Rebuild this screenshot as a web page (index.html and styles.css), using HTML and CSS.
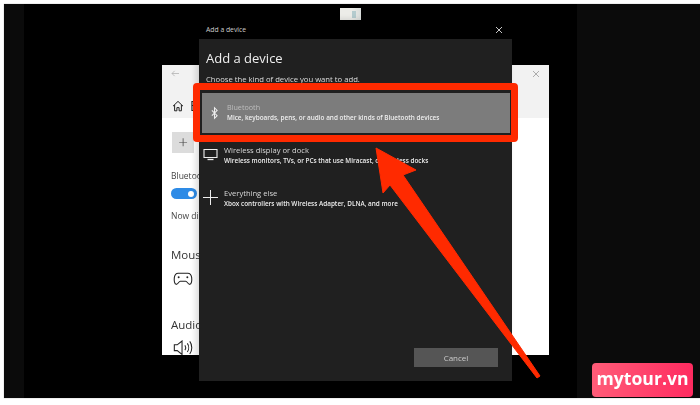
FILE: index.html
```html
<!DOCTYPE html>
<html lang="en">
<head>
<meta charset="utf-8">
<title>Add a device</title>
<link rel="stylesheet" href="styles.css">
</head>
<body>
<main class="stage">
  <div class="center-black"></div>
  <div class="thumb"><span class="thumb-dot"></span></div>

  <section class="settings">
    <header class="settings-bar">
      <svg class="back" viewBox="0 0 10 8"><path d="M9 4H1M4 1 1 4l3 3" fill="none" stroke="#aaa" stroke-width=".8"/></svg>
      <svg class="close-light" viewBox="0 0 8 8"><path d="M1 1l6 6M7 1 1 7" fill="none" stroke="#999" stroke-width=".8"/></svg>
    </header>
    <div class="settings-body">
      <div class="settings-title">
        <svg class="home" viewBox="0 0 12 12"><path d="M1 6.2 6 1.4l5 4.8M2.6 5v5.8h2.3V7.6h2.2v3.2h2.3V5" fill="none" stroke="#222" stroke-width="1"/></svg>
        <span class="page-name">B</span>
      </div>
      <div class="add-tile">+</div>
      <p class="label label-bt">Bluetooth</p>
      <div class="toggle"><span class="knob"></span></div>
      <p class="label label-now">Now discoverable as</p>
      <p class="label label-big label-mouse">Mouse, keyboard, &amp; pen</p>
      <svg class="gamepad" viewBox="0 0 20 14"><path d="M5 1.2h10c2.2 0 3.6 1.8 4 4.6.4 3.2-.2 6.8-2 7-1.8.2-2.6-3.2-4.2-3.2H7.2C5.600 9.600 4.800 13 3 12.800c-1.800-.2-2.400-3.800-2-7 .4-2.800 1.800-4.600 4-4.600z" fill="none" stroke="#222" stroke-width="1.100"/><circle cx="5.500" cy="5.500" r="1" fill="#222"/><circle cx="14.500" cy="5.500" r="1" fill="#222"/></svg>
      <p class="label label-big label-audio">Audio</p>
      <svg class="speaker" viewBox="0 0 20 16"><path d="M1 5h3l5-4v14l-5-4H1z" fill="none" stroke="#222" stroke-width="1.100"/><path d="M12 5.500c1 1.500 1 3.500 0 5M14.500 3.500c1.800 2.500 1.800 6.500 0 9M17 1.500c2.800 3.500 2.800 9.500 0 13" fill="none" stroke="#222" stroke-width="1.100"/></svg>
    </div>
  </section>

  <section class="dialog">
    <header class="dialog-bar">
      <span class="dialog-bar-title">Add a device</span>
      <svg class="close-dark" viewBox="0 0 8 8"><path d="M1 1l6 6M7 1 1 7" fill="none" stroke="#ddd" stroke-width=".9"/></svg>
    </header>
    <div class="dialog-body">
      <h1 class="heading">Add a device</h1>
      <p class="subtitle">Choose the kind of device you want to add.</p>
      <ul class="options">
        <li class="option option-active">
          <svg class="icon-bt" viewBox="0 0 8 14"><path d="M1 4l6 6-3 3V1l3 3-6 6" fill="none" stroke="#eee" stroke-width="1.200"/></svg>
          <div>
            <div class="option-title option-title-active">Bluetooth</div>
            <div class="option-desc">Mice, keyboards, pens, or audio and other kinds of Bluetooth devices</div>
          </div>
        </li>
        <li class="option">
          <svg class="icon-main" viewBox="0 0 15 12"><path d="M1 1h13v8H1z" fill="none" stroke="#eee" stroke-width="1.100"/><path d="M4.500 11h6" stroke="#eee" stroke-width="1.300"/></svg>
          <div>
            <div class="option-title">Wireless display or dock</div>
            <div class="option-desc">Wireless monitors, TVs, or PCs that use Miracast, or wireless docks</div>
          </div>
        </li>
        <li class="option">
          <svg class="icon-main" viewBox="0 0 15 15"><path d="M7.500 0v15M0 7.500h15" fill="none" stroke="#eee" stroke-width="1"/></svg>
          <div>
            <div class="option-title">Everything else</div>
            <div class="option-desc">Xbox controllers with Wireless Adapter, DLNA, and more</div>
          </div>
        </li>
      </ul>
      <div class="actions"><button class="cancel" type="button">Cancel</button></div>
    </div>
  </section>

  <div class="red-box"></div>
  <svg class="arrow" viewBox="0 0 700 405"><path d="M376 148 416 170 403 175 540 376 537 378 390 185 383 193Z" fill="#ff2a00" stroke="#ff2a00" stroke-width="1" stroke-linejoin="round"/></svg>

  <div class="logo">mytour.vn</div>
</main>
</body>
</html>
```

FILE: styles.css
```css
* { box-sizing: border-box; }
html, body { margin: 0; padding: 0; }
body {
  width: 700px;
  height: 405px;
  background: #fff;
  overflow: hidden;
  font-family: "Open Sans", "Liberation Sans", sans-serif;
}
.stage {
  position: relative;
  width: 696px;
  height: 394px;
  margin: 4px 0 0 4px;
  background: #0b0b0b;
  box-shadow: 0 0 1px #999;
  overflow: hidden;
}
.center-black {
  position: absolute;
  left: 20px;
  top: 0;
  width: 553px;
  height: 100%;
  background: #000;
}
.thumb {
  position: absolute;
  left: 336px;
  top: 4px;
  width: 21px;
  height: 12px;
  background: linear-gradient(90deg, #ecece8 55%, #d8dcda);
  display: flex;
  align-items: center;
  justify-content: center;
  filter: blur(.5px);
}
.thumb-dot {
  width: 4px;
  height: 7px;
  margin-left: 6px;
  background: #b4cbce;
}

/* White settings window behind the dialog */
.settings {
  position: absolute;
  left: 158px;
  top: 61px;
  width: 387px;
  height: 290px;
  background: #fff;
  color: #333;
  overflow: hidden;
  filter: blur(.35px);
}
.settings-bar {
  height: 16px;
  background: #f2f2f2;
  display: flex;
  align-items: center;
  justify-content: space-between;
  padding: 0 9px;
}
.back { width: 9px; height: 7px; }
.close-light { width: 8px; height: 8px; margin-top: 1px; }
.settings-body {
  height: 274px;
  padding-left: 9px;
  background: linear-gradient(#f2f2f2 37px, #fff 37px);
  display: flex;
  flex-direction: column;
  align-items: flex-start;
}
.settings-title {
  display: flex;
  align-items: center;
  gap: 6px;
  height: 20px;
  margin-top: 15px;
  padding-left: 1px;
  white-space: nowrap;
}
.home { width: 12px; height: 12px; }
.page-name { font-size: 14px; color: #222; }
.add-tile {
  width: 22px;
  height: 22px;
  margin: 17px 0 0 1px;
  background: #dcdcdc;
  font-size: 17px;
  line-height: 20px;
  text-align: center;
  color: #444;
  font-weight: 300;
}
.label {
  margin: 0;
  font-size: 8.500px;
  line-height: 12px;
  white-space: nowrap;
  color: #444;
}
.label-big { font-size: 11.500px; line-height: 15px; color: #333; }
.label-bt { margin-top: 17px; }
.toggle {
  width: 26px;
  height: 11px;
  margin-top: 6px;
  border-radius: 6px;
  background: #2e8be6;
  display: flex;
  align-items: center;
  justify-content: flex-end;
  padding-right: 3px;
}
.knob { width: 6px; height: 6px; border-radius: 50%; background: #fff; }
.label-now { margin-top: 11px; }
.label-mouse { margin-top: 25px; }
.gamepad { width: 20px; height: 14px; margin: 10px 0 0 2px; }
.label-audio { margin-top: 31px; }
.speaker { width: 20px; height: 16px; margin: 8px 0 0 2px; }

/* Dark dialog */
.dialog {
  position: absolute;
  left: 195px;
  top: 16px;
  width: 313px;
  height: 361px;
  background: #202020;
  color: #fff;
  box-shadow: -3px 0 6px rgba(0, 0, 0, .15);
  display: flex;
  flex-direction: column;
  filter: blur(.3px);
}
.dialog-bar {
  height: 19px;
  background: #000;
  display: flex;
  align-items: center;
  justify-content: space-between;
  padding: 0 9px 0 7px;
  flex: none;
}
.dialog-bar-title { font-size: 6.800px; color: #ccc; }
.close-dark { width: 8px; height: 8px; }
.dialog-body {
  flex: 1;
  display: flex;
  flex-direction: column;
  min-height: 0;
}
.heading {
  margin: 9px 0 0 7px;
  font-size: 13px;
  line-height: 20px;
  font-weight: 400;
  color: #eee;
}
.subtitle {
  margin: 5px 0 0 7px;
  font-size: 7.700px;
  line-height: 12px;
  color: #ddd;
}
.options {
  list-style: none;
  margin: 8px 2px 0 3px;
  padding: 0;
}
.option {
  height: 43px;
  display: flex;
  align-items: flex-start;
  padding: 9px 0 0 1px;
  gap: 6px;
}
.option-active {
  height: 40px;
  margin-bottom: 3px;
  background: #7c7c7c;
  padding: 9px 0 0 9px;
  gap: 9px;
}
.icon-bt { width: 7px; height: 14px; margin-top: 4px; }
.icon-main { width: 15px; height: 15px; margin-top: 2px; }
.option-title {
  font-size: 7.600px;
  line-height: 11px;
  color: #d8d8d8;
  white-space: nowrap;
}
.option-title-active { font-size: 7.200px; color: #bdbdbd; }
.option-desc {
  font-size: 6.400px;
  line-height: 10px;
  font-weight: 600;
  color: #eee;
  white-space: nowrap;
}
.actions {
  margin-top: auto;
  padding: 0 14px 14px 0;
  display: flex;
  justify-content: flex-end;
}
.cancel {
  width: 84px;
  height: 19px;
  padding: 0;
  border: 0;
  background: #555;
  color: #ccc;
  font: 8px/19px "Open Sans", "Liberation Sans", sans-serif;
}

/* Annotations over the screenshot */
.red-box {
  position: absolute;
  left: 189px;
  top: 79px;
  width: 325px;
  height: 59px;
  border: 7px solid #ff2a00;
  border-radius: 4px;
}
.arrow {
  position: absolute;
  left: -4px;
  top: -4px;
  width: 700px;
  height: 405px;
}
.logo {
  position: absolute;
  left: 588px;
  top: 359px;
  width: 101px;
  height: 34px;
  border-radius: 4px;
  background: linear-gradient(90deg, #ff5c78, #ff2b60);
  color: #fff;
  font-size: 17.600px;
  font-weight: 700;
  line-height: 30px;
  text-align: center;
  white-space: nowrap;
  filter: blur(.3px);
}
```
